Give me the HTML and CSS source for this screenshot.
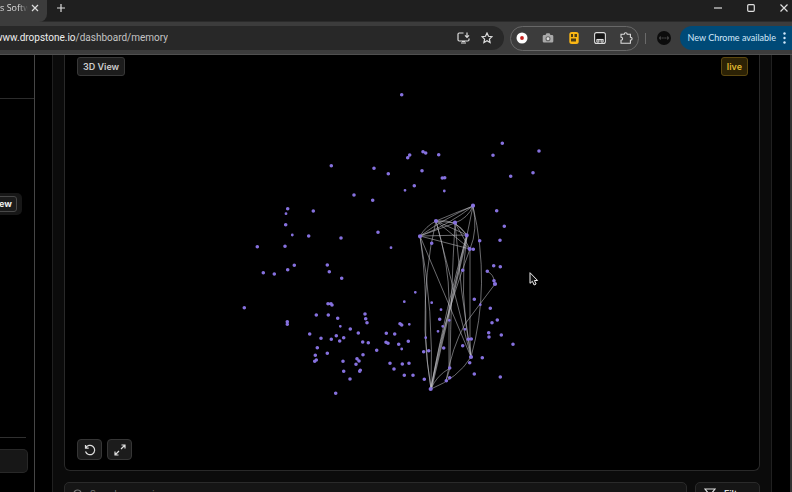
FILE: index.html
```
<!DOCTYPE html>
<html lang="en">
<head>
<meta charset="utf-8">
<title>Memory</title>
<link rel="stylesheet" href="styles.css">
</head>
<body>
<div class="browser">
  <header class="tabs">
    <div class="tab">
      <span class="tab-title">s Softw</span>
      <button class="tab-close" aria-label="Close tab"><svg width="8" height="8" viewBox="0 0 8 8"><path d="M1 1l6 6M7 1l-6 6"/></svg></button>
    </div>
    <button class="new-tab" aria-label="New tab"><svg width="8" height="8" viewBox="0 0 8 8"><path d="M4 0v8M0 4h8"/></svg></button>
    <div class="window-controls">
      <button aria-label="Minimize"><svg width="8" height="8" viewBox="0 0 8 8"><path d="M0 4h8"/></svg></button>
      <button aria-label="Maximize"><svg width="8" height="8" viewBox="0 0 8 8"><rect x=".7" y=".7" width="6.6" height="6.6" rx="1"/></svg></button>
      <button aria-label="Close"><svg width="8" height="8" viewBox="0 0 8 8"><path d="M.5.5l7 7M7.500.5l-7 7"/></svg></button>
    </div>
  </header>

  <div class="toolbar">
    <div class="address">
      <div class="url"><span><b>www.dropstone.io</b>/dashboard/memory</span></div>
      <button aria-label="Install app"><svg width="13" height="12" viewBox="0 0 13 12"><path d="M6.500 1H2.200Q1 1 1 2.200v5.600Q1 9 2.200 9h8.600Q12 9 12 7.800V6.500M4 11h5M5 9.500h3M10 .5v4.700M8 3.400l2 2 2-2"/></svg></button>
      <button aria-label="Bookmark this tab"><svg width="12" height="12" viewBox="0 0 12 12"><path d="M6 1l1.500 3.300 3.500.4-2.600 2.400.7 3.500L6 8.800l-3.100 1.800.7-3.500L1 4.700l3.500-.4z"/></svg></button>
    </div>
    <div class="extensions">
      <button aria-label="Recorder"><svg width="12" height="12" viewBox="0 0 12 12"><circle class="white" cx="6" cy="6" r="5.500"/><circle class="red" cx="6" cy="6" r="1.900"/></svg></button>
      <button aria-label="Screenshot"><svg width="12" height="12" viewBox="0 0 12 12"><path class="grey" d="M2 3h1.500l1-1.700h3l1 1.700H10q1.300 0 1.300 1.300v5Q11.300 10.600 10 10.600H2Q.7 10.600.7 9.300v-5Q.7 3 2 3z"/><circle class="lens" cx="6" cy="6.700" r="2"/></svg></button>
      <button aria-label="Notes"><svg width="12" height="12" viewBox="0 0 12 12"><rect class="amber" x="1.300" width="9.400" height="12" rx="2.500"/><path class="dark" d="M3 2h2v3H3zM6.500 2H9v3H6.500zM3 6.500h5v3H3z"/></svg></button>
      <button aria-label="Reader"><svg width="12" height="12" viewBox="0 0 12 12"><rect class="ink" x=".6" y=".6" width="10.800" height="10.800" rx="2"/><path d="M2.500 7.500h7"/><circle cx="3.900" cy="8.900" r="1.200"/><circle cx="8.100" cy="8.900" r="1.200"/></svg></button>
      <button aria-label="Extensions"><svg width="13" height="12" viewBox="0 0 13 12"><path d="M1 2.200h3.200Q4.200.7 5.700.7t1.500 1.500h3.200v3q1.700 0 1.700 1.500t-1.700 1.500v3H1V8.300q1.600 0 1.600-1.500T1 5.200z"/></svg></button>
    </div>
    <span class="divider"></span>
    <button class="profile" aria-label="Profile"><svg width="14" height="14" viewBox="0 0 14 14"><circle cx="7" cy="7" r="7"/><path d="M3.500 5.800H3v2.400h.5M10.500 5.800h.5v2.400h-.5M4.700 7h1M6.500 7h1M8.300 7h1"/></svg></button>
    <button class="update">New Chrome available<svg width="3" height="12" viewBox="0 0 3 12"><circle cx="1.500" cy="1.500" r="1.200"/><circle cx="1.500" cy="6" r="1.200"/><circle cx="1.500" cy="10.500" r="1.200"/></svg></button>
  </div>

  <div class="page">
    <aside class="sidebar">
      <div class="side-top"></div>
      <div class="side-main"><div class="switcher"><button>View</button></div></div>
      <div class="side-foot"><div class="account"></div></div>
    </aside>
    <main class="panel">
      <section class="canvas">
        <div class="canvas-bar"><button class="chip">3D View</button><span class="chip live">live</span></div>
        <svg class="graph" viewBox="65 78 694 360" role="img" aria-label="Memory graph">
          <g class="edges">
            <path d="M473 206Q445 218 420 236M473 206Q450 224 420 236M473 206Q455 213 436 221M473 206Q468 218 455 223M473 206L467 235M473 206Q478 230 470 249M473 206Q491 285 471 357"/>
            <path d="M420 236Q426 226 436 221M420 236L455 223M420 236L467 235M420 236L470 249M436 221L455 223M436 221L467 235M436 221L470 249M436 221Q456 218 467 235M455 223L467 235M455 223L470 249"/>
            <path d="M420 236L471 357M420 236Q427 282 425.700 338Q427 365 431 389M436 221Q424 270 425 330Q426 360 431 389M420 236Q434 310 431 389M436 221L471 357M436 221Q449 265 449 300V368M455 223Q451 290 450 368M455 223Q460 290 471 357M467 235Q458 290 471 357M470 249V339L471 357"/>
            <path class="strong" d="M467 235L431 389"/><path d="M467 235Q446 305 431 389M470 249Q440 330 431 389"/>
            <path d="M495 284L465 324Q452 347 446 381M487 271Q494 275 494 281M431 389Q436 376 450 368M431 389Q458 378 471 357M450 368L446 381"/>
          </g>
          <path class="dots" d="M401.700 94.700h0M331.300 165.700h0M374 168.300h0M388.300 173.700h0M407.700 157.700h0M409.700 155h0M423 151.700h0M425.700 153h0M438.700 154.700h0M422 170.700h0M414.300 185.700h0M442.300 178h0M444.700 177.700h0M354 195h0M502.300 143.300h0M493 155.300h0M539 151h0M533 172.700h0M510.700 176.300h0M287.700 208.700h0M285.700 224.700h0M308.700 236h0M313.300 211h0M257.300 246.700h0M285 246.300h0M294.300 265.300h0M287.700 269.700h0M274.300 274h0M263.300 272.700h0M327.300 265h0M329.300 271.700h0M341.700 278.300h0M341 238h0M372.700 200.300h0M378 232.300h0M244.300 307.700h0M287.300 321.700h0M287.300 324.300h0M328 303.700h0M331 303.700h0M332 305h0M316.300 315h0M328.300 315h0M337.700 318.300h0M350.300 329h0M358.300 333h0M365 314h0M365.700 318.700h0M367 322.700h0M309.700 334h0M321 338.300h0M331.300 339.300h0M336.300 335.700h0M343.700 337.700h0M339.700 341h0M317.300 347.700h0M327.300 353.300h0M315.300 355.300h0M316.300 360h0M314.700 361.300h0M362.700 342h0M368.300 342.700h0M376.700 350.300h0M363 354.700h0M357 358.700h0M359 361h0M356 364.300h0M343 361.300h0M343.700 371.300h0M360.300 370.300h0M359.700 371.300h0M350 379h0M335.700 393.300h0M386.300 333.300h0M394.700 334h0M400 323.700h0M401.700 325h0M386 342.300h0M388 343.300h0M398.700 344.300h0M408.300 341.300h0M390 363.300h0M394 369h0M402.300 364h0M409 363.300h0M404.300 375.300h0M413 375.300h0M424.300 379.300h0M423.700 351.700h0M428.700 350.700h0M439.700 319.300h0M443.700 348h0M462.700 345.700h0M468.300 339.300h0M471.300 339h0M469.700 362.700h0M482.300 357.700h0M474.300 374h0M500.300 377h0M513 344.300h0M501.300 335h0M488.700 332.700h0M489 337h0M492 322.700h0M497.300 320h0M490.300 308.300h0M474.300 299.300h0M446.300 380.700h0M449.700 377.700h0M449.700 368h0M431.700 243.300h0M473.300 249.300h0M479.700 240.700h0M462.700 270.300h0M496.700 210.700h0M504.300 226.300h0M500 240.300h0M493.700 265.700h0M500.300 266.700h0M487.300 271.300h0M494 280.700h0"/>
          <path class="dots small" d="M405 190.300h0M444.300 191h0M286 213.700h0M292.300 235h0M391 247.700h0M340.300 326.300h0M401.700 349h0M409.300 324.300h0M415.300 292.300h0M404.300 301.700h0M431.700 302.700h0M441 309.700h0M449.300 320.300h0M442.700 326.300h0M438 331.300h0M425.700 337.700h0M465 329.300h0M480.300 304.700h0"/>
          <path class="dots large" d="M473 205.700h0M436 221h0M455 222.700h0M420 236.300h0M466.700 235.300h0M469.700 249h0M495 284h0M471 357h0M430.700 389h0"/>
          <path class="pointer" d="M530 272.700v10.600l2.400-2 1.700 3.700 2-1-1.700-3.500h3.200z"/>
        </svg>
        <div class="canvas-tools">
          <button aria-label="Reset view"><svg width="12" height="12" viewBox="0 0 12 12"><path d="M1.500 1v3.200h3.200M1.700 4A4.700 4.700 0 1 1 1.500 7.500"/></svg></button>
          <button aria-label="Full screen"><svg width="12" height="12" viewBox="0 0 12 12"><path d="M7.500 1H11v3.500M11 1L7 5M4.500 11H1V7.500M1 11l4-4"/></svg></button>
        </div>
      </section>
      <div class="filters">
        <label class="search"><svg width="10" height="10" viewBox="0 0 10 10"><circle cx="4.500" cy="4.500" r="3.500"/><path d="M7 7l2.500 2.500"/></svg><input type="text" placeholder="Search memories..." aria-label="Search memories"></label>
        <button class="filter"><svg width="12" height="12" viewBox="0 0 12 12"><path d="M1 1h10L7 6v5L5 9.500V6z"/></svg>Filters</button>
      </div>
    </main>
    <div class="scroll"></div>
  </div>
</div>
</body>
</html>
```
FILE: styles.css
```
* { box-sizing: border-box; }
body { margin: 0; background: #000; color: #ddd; font: 10px/12px "Open Sans", "Noto Sans", sans-serif; }
button { margin: 0; padding: 0; border: 0; background: none; color: inherit; font: inherit; display: flex; align-items: center; justify-content: center; flex: none; }
svg { display: block; flex: none; fill: none; stroke: #ddd; stroke-width: 1.2; }

.browser { display: flex; flex-direction: column; height: 100vh; overflow: hidden; }

.tabs { display: flex; flex: none; height: 22px; background: #1f1f1f; box-shadow: inset 0 -1px #2b2b2b; }
.tab { display: flex; align-items: center; width: 47px; padding: 0 8px 6px 0; background: #3c3c3c; border-radius: 0 0 8px 0; }
.tab-title { flex: 1; width: 0; overflow: hidden; white-space: nowrap; font-size: 9px; mask-image: linear-gradient(90deg, #000 60%, transparent 90%); }
.new-tab { padding: 0 10px 6px; }
.window-controls { display: flex; gap: 25px; margin-left: auto; padding: 0 4px 6px 0; }

.toolbar { display: flex; align-items: center; flex: none; height: 33px; background: #3c3c3c; border-bottom: 1px solid #505050; }
.address { display: flex; align-items: center; flex: 1; min-width: 0; gap: 11px; height: 24px; padding-right: 11px; background: #282828; border-radius: 0 12px 12px 0; }
.url { display: flex; justify-content: flex-end; width: 168px; margin-right: auto; overflow: hidden; white-space: nowrap; color: #c4c4c4; font-family: Roboto, sans-serif; }
.url b { font-weight: 400; color: #eee; }
.extensions { display: flex; align-items: center; gap: 14px; height: 25px; margin-left: 6px; padding: 0 5px; border: 1px solid #686868; border-radius: 13px; }
.extensions svg { stroke-width: 1.1; }
.extensions .white { fill: #fff; stroke: none; }
.red { fill: #c5221f; stroke: none; }
.grey { fill: #aaa; stroke: none; }
.lens { fill: #ddd; stroke: #666; }
.amber { fill: #fbb714; stroke: none; }
.dark { fill: #4d3d16; stroke: none; }
.ink { fill: #161616; }
.divider { width: 1px; height: 11px; margin: 0 11px 0 6px; background: #6a6a6a; }
.profile circle { fill: #0c0c0c; stroke: none; }
.profile path { stroke: #666; stroke-width: 1; }
.update { gap: 7px; height: 24px; margin-left: 9px; padding: 0 6px 0 8px; border-radius: 12px 0 0 12px; background: #004a77; color: #d3e9fb; font-family: Lato, sans-serif; font-size: 9px; white-space: nowrap; }
.update svg { fill: #d3e9fb; stroke: none; }

.page { display: flex; flex: 1; min-height: 0; overflow: hidden; }
.sidebar { display: flex; flex-direction: column; flex: none; width: 35px; border-right: 1px solid #464646; }
.side-top { height: 44px; border-bottom: 1px solid #2c2c2c; }
.side-main { flex: 1; padding-top: 94px; }
.switcher { display: flex; justify-content: flex-end; width: 22px; padding: 3px 5px 3px 0; overflow: hidden; background: #171717; border-radius: 0 5px 5px 0; }
.switcher button { height: 16px; padding: 0 4px; border: 1px solid #484848; border-radius: 3px; background: #1b1b1b; color: #eee; font: 700 9px/12px Inter, sans-serif; }
.side-foot { width: 26px; height: 55px; padding-top: 11px; border-top: 1px solid #303030; }
.account { width: 28px; height: 24px; background: #171717; border: 1px solid #282828; border-left: 0; border-radius: 0 5px 5px 0; }
.panel { display: flex; flex-direction: column; flex: 1; min-width: 0; gap: 11px; margin: 0 18px 0 17px; padding: 0 11px; background: #0b0b0b; border: solid #202020; border-width: 0 1px; }
.canvas { display: flex; flex-direction: column; flex: none; background: #000; border: 1px solid #292929; border-top: 0; border-radius: 0 0 6px 6px; }
.canvas-bar { display: flex; justify-content: space-between; padding: 2px 11px 2px 12px; }
.chip { height: 19px; padding: 2px 5px; border: 1px solid #383838; border-radius: 3px; background: #1c1c1c; color: #ccc; font: 600 9px/13px Inter, sans-serif; }
.live { border-color: #5c4810; background: #2c2205; color: #dfb52f; }
.graph { width: 100%; height: auto; }
.edges { stroke: #c5c5ca; stroke-width: .9; stroke-opacity: .6; }
.strong { stroke-width: 2; }
.dots { stroke: #8671df; stroke-width: 3.6; stroke-linecap: round; }
.small { stroke-width: 2.800; }
.large { stroke-width: 4.200; }
.pointer { fill: #111; stroke: #eee; stroke-width: 1; }
.canvas-tools { display: flex; gap: 5px; padding: 1px 12px 10px; }
.canvas-tools button { width: 25px; height: 21px; border: 1px solid #363636; border-radius: 4px; background: #1c1c1c; }
.filters { display: flex; flex: none; gap: 8px; }
.search, .filter { height: 24px; border: 1px solid #2a2a2a; border-radius: 5px; background: #151515; }
.search { display: flex; align-items: center; flex: 1; gap: 7px; padding: 0 8px; }
.search svg { stroke: #777; }
.search input { flex: 1; min-width: 0; padding: 0; border: 0; outline: 0; background: none; color: #ccc; font: 9px/12px Inter, sans-serif; }
.search input::placeholder { color: #777; }
.filter { gap: 8px; width: 65px; font: 600 9px/12px Inter, sans-serif; }
.scroll { flex: none; width: 2px; background: #333; }
```
